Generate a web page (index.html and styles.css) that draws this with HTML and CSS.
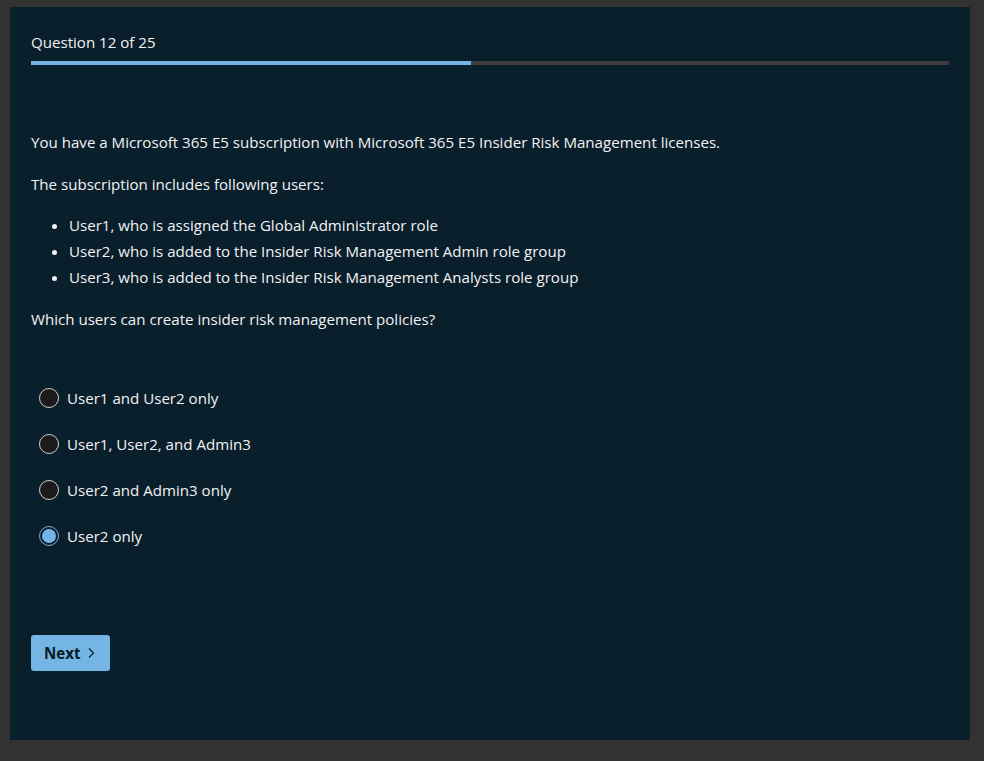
FILE: index.html
```html
<!DOCTYPE html>
<html>
<head>
<meta charset="utf-8">
<link rel="stylesheet" href="styles.css">
</head>
<body>
<div class="panel">
  <div class="header">Question 12 of 25</div>
  <div class="progress"><div class="progress-fill" style="width:47.93%"></div></div>
  <div class="question">
    <p class="para">You have a Microsoft 365 E5 subscription with Microsoft 365 E5 Insider Risk Management licenses.</p>
    <p class="para para-tight">The subscription includes following users:</p>
    <ul class="users">
      <li>User1, who is assigned the Global Administrator role</li>
      <li>User2, who is added to the Insider Risk Management Admin role group</li>
      <li>User3, who is added to the Insider Risk Management Analysts role group</li>
    </ul>
    <p class="para">Which users can create insider risk management policies?</p>
  </div>
  <div class="options">
    <label class="option"><span class="radio"></span><span>User1 and User2 only</span></label>
    <label class="option"><span class="radio"></span><span>User1, User2, and Admin3</span></label>
    <label class="option"><span class="radio"></span><span>User2 and Admin3 only</span></label>
    <label class="option"><span class="radio checked"></span><span>User2 only</span></label>
  </div>
  <button class="next">Next <svg width="10" height="12" viewBox="0 0 10 12"><path d="M3 1.5 L7.5 6 L3 10.5" fill="none" stroke="#0a1f2c" stroke-width="1.2"/></svg></button>
</div>
</body>
</html>
```
FILE: styles.css
```css
html, body {
  margin: 0;
  padding: 0;
  background: #323232;
}
body {
  padding: 7px 14px 21px 10px;
  font-family: "Open Sans", "Noto Sans", sans-serif;
  color: #f2f2f2;
}
.panel {
  width: 960px;
  height: 733px;
  box-sizing: border-box;
  background: #0a1f2c;
  padding: 24px 21px 0 21px;
}
.header {
  font-size: 15.1px;
  line-height: 22px;
}
.progress {
  margin-top: 8px;
  height: 4px;
  background: #3d3d3d;
}
.progress-fill {
  height: 4px;
  background: #74b5e6;
}
.question {
  margin-top: 66px;
  font-size: 15.1px;
}
.para {
  margin: 0 0 20px 0;
  line-height: 22px;
}
.para-tight {
  margin-bottom: 17px;
}
.users {
  margin: 0 0 18px 0;
  padding-left: 38px;
}
.users li {
  line-height: 26px;
}
.options {
  margin-top: 57px;
  display: flex;
  flex-direction: column;
  gap: 24px;
  padding-left: 8px;
}
.option {
  display: flex;
  align-items: center;
  gap: 8px;
  font-size: 15.1px;
  line-height: 22px;
}
.radio {
  width: 18px;
  height: 18px;
  border-radius: 50%;
  border: 1.5px solid #d0d0d0;
  background: #1b1b1b;
  flex: none;
  box-sizing: content-box;
  position: relative;
}
.radio.checked {
  border-color: #74b5e6;
  background: #0a1f2c;
}
.radio.checked::after {
  content: "";
  position: absolute;
  left: 2px;
  top: 2px;
  width: 14px;
  height: 14px;
  border-radius: 50%;
  background: #74b5e6;
}
.next {
  margin-top: 88px;
  display: flex;
  align-items: center;
  gap: 6px;
  width: 79px;
  height: 36px;
  padding: 0 0 0 13px;
  border: none;
  border-radius: 3px;
  background: #74b5e6;
  color: #0a1a24;
  font-family: "Open Sans", "Noto Sans", sans-serif;
  font-weight: 700;
  font-size: 15.1px;
}
```
